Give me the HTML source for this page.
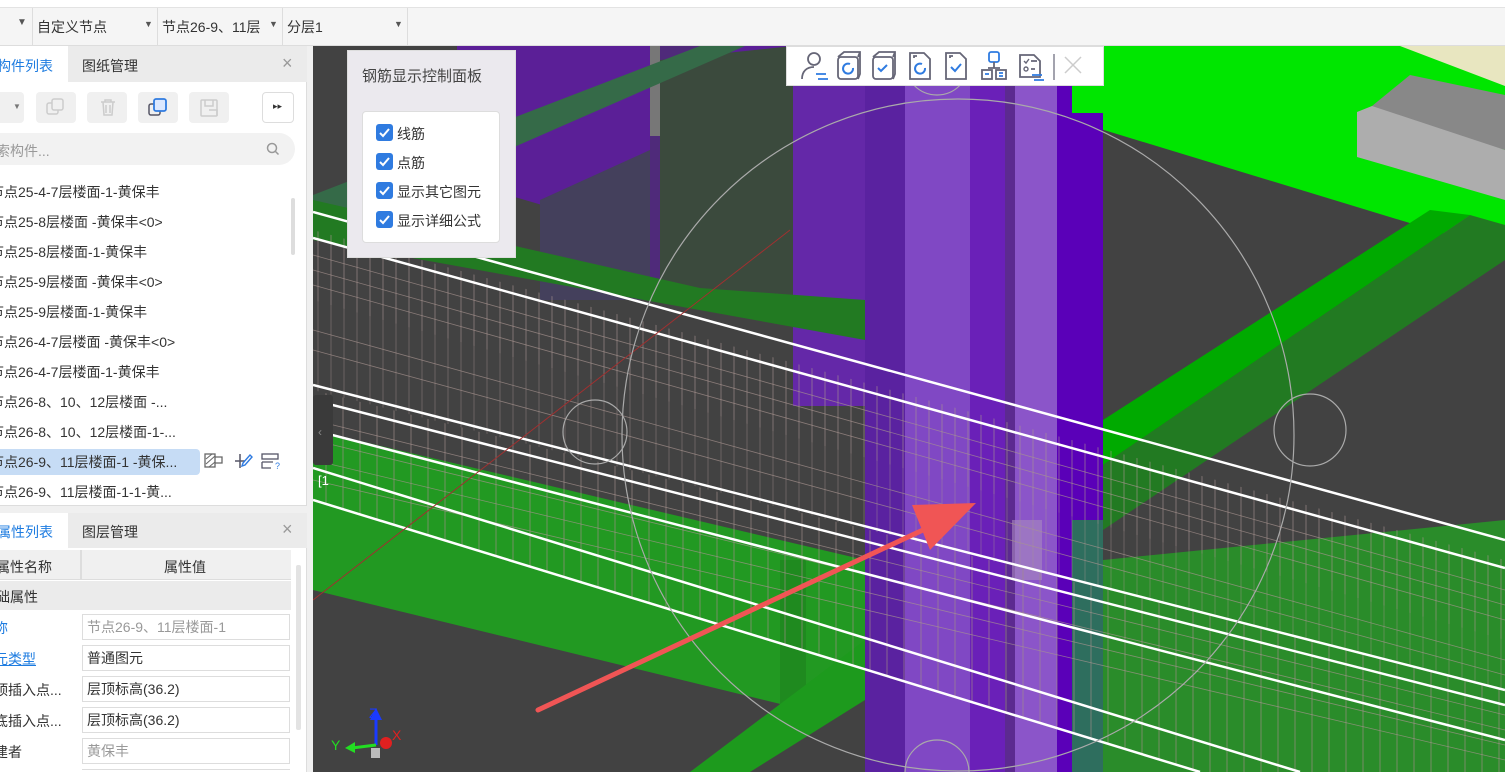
<!DOCTYPE html>
<html><head><meta charset="utf-8">
<style>
*{margin:0;padding:0;box-sizing:border-box}
html,body{width:1505px;height:772px;overflow:hidden}
body{position:relative;background:#fff;font-family:"Liberation Sans","Noto Sans CJK SC",sans-serif;font-size:14px;color:#333}
.a{position:absolute}
.t{position:absolute;white-space:nowrap}
.btn{position:absolute;background:#f0f0f0;border-radius:4px;height:31px;top:92px}
.row{position:absolute;left:-10px;white-space:nowrap;font-size:14px;color:#333}
.inp{position:absolute;left:82px;width:208px;height:26px;border:1px solid #ddd;background:#fff;padding-left:4px;line-height:24px;font-size:14px}
.cb{position:absolute;left:376px;width:17px;height:17px;background:#2f7be0;border-radius:3px}
.cb svg{position:absolute;left:2px;top:2px}
.cl{position:absolute;left:397px;font-size:14px;color:#333}
</style></head><body>
<div class="a" style="left:0;top:0;width:1505px;height:8px;background:#fff;border-bottom:1px solid #e3e3e3"></div>
<div class="a" style="left:0;top:8px;width:1505px;height:38px;background:#f5f5f5;border-bottom:1px solid #ddd"></div>
<div class="t" style="left:17px;top:17px;font-size:10px;color:#555">▼</div>
<div class="a" style="left:32px;top:8px;width:1px;height:38px;background:#ddd"></div>
<div class="t" style="left:37px;top:17px">自定义节点</div>
<div class="t" style="left:144px;top:19px;font-size:9px;color:#555">▼</div>
<div class="a" style="left:157px;top:8px;width:1px;height:38px;background:#ddd"></div>
<div class="t" style="left:162px;top:17px;width:106px;overflow:hidden">节点26-9、11层</div>
<div class="t" style="left:269px;top:19px;font-size:9px;color:#555">▼</div>
<div class="a" style="left:282px;top:8px;width:1px;height:38px;background:#ddd"></div>
<div class="t" style="left:287px;top:17px">分层1</div>
<div class="t" style="left:394px;top:19px;font-size:9px;color:#555">▼</div>
<div class="a" style="left:407px;top:8px;width:1px;height:38px;background:#ddd"></div>

<div class="a" style="left:0;top:46px;width:307px;height:460px;background:#fff;border-right:1px solid #ddd;border-bottom:1px solid #ddd"></div>
<div class="a" style="left:68px;top:46px;width:239px;height:36px;background:#ebebeb"></div>
<div class="t" style="left:-3px;top:56px;color:#1e7ce0">构件列表</div>
<div class="t" style="left:82px;top:56px">图纸管理</div>
<div class="t" style="left:282px;top:53px;font-size:18px;color:#999">×</div>
<div class="btn" style="left:-5px;width:29px"></div>
<div class="t" style="left:13px;top:102px;font-size:8px;color:#777">▼</div>
<div class="btn" style="left:36px;width:40px"></div>
<div class="btn" style="left:87px;width:40px"></div>
<div class="btn" style="left:138px;width:40px"></div>
<div class="btn" style="left:189px;width:40px"></div>
<div class="btn" style="left:262px;width:32px;background:#fff;border:1px solid #ddd"></div>
<svg class="a" style="left:44px;top:96px" width="24" height="24"><rect x="3" y="7" width="11" height="11" rx="2" fill="none" stroke="#ccc" stroke-width="1.5"/><rect x="8" y="3" width="11" height="11" rx="2" fill="#f0f0f0" stroke="#ccc" stroke-width="1.5"/></svg>
<svg class="a" style="left:96px;top:96px" width="24" height="24"><path d="M5 6h14M9 6V4h6v2M7 6l1 13h8l1-13M10 9v8M14 9v8" fill="none" stroke="#ccc" stroke-width="1.5"/></svg>
<svg class="a" style="left:146px;top:96px" width="24" height="24"><rect x="3" y="8" width="11" height="11" rx="2" fill="none" stroke="#556" stroke-width="1.5"/><rect x="8" y="3" width="12" height="12" rx="2" fill="#dbe8ff" stroke="#2f7be0" stroke-width="1.8"/></svg>
<svg class="a" style="left:197px;top:96px" width="24" height="24"><rect x="4" y="4" width="16" height="16" rx="1" fill="none" stroke="#ccc" stroke-width="1.5"/><path d="M8 4v6h8V4M12 14h8v6" fill="none" stroke="#ccc" stroke-width="1.5"/></svg>
<div class="t" style="left:273px;top:101px;font-size:9px;color:#333">▸▸</div>
<div class="a" style="left:-20px;top:133px;width:315px;height:32px;border-radius:16px;background:#f2f2f2"></div>
<div class="t" style="left:-4px;top:141px;color:#999">索构件...</div>
<svg class="a" style="left:266px;top:142px" width="14" height="14"><circle cx="6" cy="6" r="4.5" fill="none" stroke="#999" stroke-width="1.5"/><path d="M9.5 9.5l3 3" stroke="#999" stroke-width="1.5"/></svg>
<div class="a" style="left:291px;top:198px;width:4px;height:57px;border-radius:2px;background:#ddd"></div>
<div class="row" style="top:182px">节点25-4-7层楼面-1-黄保丰</div>
<div class="row" style="top:212px">节点25-8层楼面 -黄保丰&lt;0&gt;</div>
<div class="row" style="top:242px">节点25-8层楼面-1-黄保丰</div>
<div class="row" style="top:272px">节点25-9层楼面 -黄保丰&lt;0&gt;</div>
<div class="row" style="top:302px">节点25-9层楼面-1-黄保丰</div>
<div class="row" style="top:332px">节点26-4-7层楼面 -黄保丰&lt;0&gt;</div>
<div class="row" style="top:362px">节点26-4-7层楼面-1-黄保丰</div>
<div class="row" style="top:392px">节点26-8、10、12层楼面 -...</div>
<div class="row" style="top:422px">节点26-8、10、12层楼面-1-...</div>
<div class="a" style="left:-5px;top:449px;width:205px;height:26px;border-radius:4px;background:#c6dcf5"></div>
<div class="row" style="top:452px">节点26-9、11层楼面-1 -黄保...</div>
<svg class="a" style="left:203px;top:451px" width="22" height="20"><rect x="2" y="3" width="10" height="13" fill="none" stroke="#666" stroke-width="1.3"/><path d="M3 8l6-5M3 13l9-8M6 16l6-5" stroke="#666" stroke-width="1"/><path d="M12 6h7v6h-7" fill="none" stroke="#666" stroke-width="1.3"/></svg>
<svg class="a" style="left:232px;top:451px" width="22" height="20"><path d="M8 3v14M3 10h10" stroke="#556" stroke-width="1.5" fill="none"/><path d="M11 12l7-8 2 2-7 8-3 1z" fill="none" stroke="#2f7be0" stroke-width="1.4"/></svg>
<svg class="a" style="left:260px;top:451px" width="24" height="20"><rect x="2" y="3" width="16" height="5" fill="none" stroke="#556" stroke-width="1.3"/><path d="M2 11h11M2 11v6h9" stroke="#556" stroke-width="1.3" fill="none"/><text x="15" y="18" font-size="9" fill="#2f7be0" font-family="Liberation Sans">?</text></svg>
<div class="row" style="top:482px">节点26-9、11层楼面-1-1-黄...</div>

<div class="a" style="left:0;top:506px;width:313px;height:7px;background:#f0f0f0"></div>
<div class="a" style="left:0;top:513px;width:307px;height:259px;background:#fff;border-right:1px solid #ddd"></div>
<div class="a" style="left:68px;top:513px;width:239px;height:35px;background:#ebebeb"></div>
<div class="t" style="left:-3px;top:522px;color:#1e7ce0">属性列表</div>
<div class="t" style="left:82px;top:522px">图层管理</div>
<div class="t" style="left:282px;top:519px;font-size:18px;color:#999">×</div>
<div class="a" style="left:0;top:550px;width:291px;height:30px;background:#f0f0f0;border-bottom:1px solid #ddd"></div>
<div class="a" style="left:80px;top:550px;width:2px;height:30px;background:#ddd"></div>
<div class="t" style="left:-4px;top:557px">属性名称</div>
<div class="t" style="left:164px;top:557px">属性值</div>
<div class="a" style="left:0;top:581px;width:291px;height:29px;background:#ebebeb"></div>
<div class="t" style="left:-4px;top:587px">础属性</div>
<div class="a" style="left:296px;top:565px;width:5px;height:165px;border-radius:2px;background:#e3e3e3"></div>
<div class="t" style="left:-6px;top:618px;color:#1e7ce0">称</div>
<div class="inp" style="top:614px;color:#999">节点26-9、11层楼面-1</div>
<div class="t" style="left:-6px;top:649px;color:#1e7ce0;text-decoration:underline">元类型</div>
<div class="inp" style="top:645px">普通图元</div>
<div class="t" style="left:-6px;top:680px">顶插入点...</div>
<div class="inp" style="top:676px">层顶标高(36.2)</div>
<div class="t" style="left:-6px;top:711px">底插入点...</div>
<div class="inp" style="top:707px">层顶标高(36.2)</div>
<div class="t" style="left:-6px;top:742px">建者</div>
<div class="inp" style="top:738px;color:#999">黄保丰</div>
<div class="a" style="left:82px;top:769px;width:208px;height:3px;border-top:1px solid #ddd"></div>
<div class="a" style="left:307px;top:46px;width:6px;height:726px;background:#f0f0f0"></div>

<svg class="a" style="left:313px;top:46px;overflow:hidden" width="1192" height="726" viewBox="313 46 1192 726">
<defs>
<pattern id="st" width="13" height="20" patternUnits="userSpaceOnUse"><line x1="6" y1="0" x2="6" y2="20" stroke="#a89490" stroke-width="1"/></pattern>
<pattern id="st2" width="17" height="20" patternUnits="userSpaceOnUse"><line x1="3" y1="0" x2="3" y2="20" stroke="#a08c88" stroke-width="1"/></pattern>
</defs>
<rect x="313" y="46" width="1192" height="726" fill="#424242"/>
<polygon points="457,46 865,46 865,300 457,180" fill="#5b1f97"/>
<polygon points="540,200 650,150 650,300 540,300" fill="#44405c"/>
<polygon points="650,46 700,46 700,300 650,300" fill="#4f2a7a"/>
<rect x="650" y="46" width="10" height="90" fill="#777"/>
<polygon points="660,60 793,46 793,300 660,300" fill="#3b4a3d"/>
<rect x="793" y="46" width="72" height="360" fill="#6428a8"/>
<polygon points="313,195 700,46 745,46 313,235" fill="#356a48"/>
<polygon points="313,200 700,288 865,300 865,340 313,240" fill="#227a22"/>
<polygon points="1072,46 1505,46 1505,252 1048,113" fill="#00e600"/>
<polygon points="1400,46 1505,46 1505,86" fill="#e8e6c0"/>
<polygon points="1372,106 1410,75 1505,95 1505,150 1372,112" fill="#888"/>
<polygon points="1357,112 1372,106 1505,150 1505,200 1357,157" fill="#adadad"/>
<polygon points="1103,420 1430,210 1470,215 1103,465" fill="#00aa00"/>
<polygon points="1103,465 1470,215 1505,225 1505,260 1103,530" fill="#227a22"/>
<polygon points="313,430 865,560 865,700 805,710 313,590" fill="#229922"/>
<rect x="780" y="560" width="26" height="150" fill="#1f8a1f"/>
<polygon points="690,772 865,640 865,700 750,772" fill="#1d9a1d"/>
<polygon points="1103,560 1505,520 1505,772 1103,772" fill="#2a8c2a"/>
<polygon points="1072,520 1103,520 1103,772 1072,772" fill="#2e6e5e"/>
<rect x="865" y="46" width="40" height="726" fill="#5a22a0"/>
<rect x="905" y="46" width="65" height="726" fill="#8048c4"/>
<rect x="970" y="46" width="35" height="726" fill="#6a20b8"/>
<rect x="1005" y="46" width="10" height="726" fill="#5c2a90"/>
<rect x="1015" y="46" width="42" height="726" fill="#8b55c9"/>
<rect x="1057" y="46" width="15" height="726" fill="#5a00b8"/>
<rect x="1072" y="113" width="31" height="407" fill="#5a00b8"/>
<rect x="1012" y="520" width="30" height="60" fill="#a88ac0" opacity="0.6"/>
<polygon points="313,230 1505,560 1505,640 313,300" fill="url(#st)" opacity="0.6"/>
<polygon points="313,390 1505,690 1505,772 1200,772 313,500" fill="url(#st2)" opacity="0.65"/>
<polygon points="313,300 1505,640 1505,690 313,390" fill="url(#st)" opacity="0.4"/>
<g stroke="#a89490" stroke-width="0.8" opacity="0.7">
<line x1="313" y1="255" x2="1505" y2="590"/><line x1="313" y1="270" x2="1505" y2="605"/><line x1="313" y1="285" x2="1505" y2="620"/>
<line x1="313" y1="330" x2="1505" y2="660"/><line x1="313" y1="350" x2="1505" y2="675"/>
<line x1="313" y1="420" x2="1505" y2="715"/><line x1="313" y1="440" x2="1505" y2="730"/><line x1="313" y1="460" x2="1505" y2="745"/><line x1="313" y1="480" x2="1505" y2="760"/>
</g>
<g stroke="#fff" stroke-width="2.5">
<line x1="313" y1="212" x2="1505" y2="540"/>
<line x1="313" y1="238" x2="1505" y2="568"/>
<line x1="313" y1="385" x2="1505" y2="690"/>
<line x1="313" y1="400" x2="1505" y2="705"/>
<line x1="313" y1="468" x2="1300" y2="772"/>
<line x1="313" y1="500" x2="1200" y2="772"/>
<line x1="313" y1="430" x2="1505" y2="740"/>
</g>
<line x1="313" y1="600" x2="790" y2="230" stroke="#a03030" stroke-width="1"/>
<g fill="none" stroke="#aaa" stroke-width="1.2">
<circle cx="958" cy="435" r="336"/>
<circle cx="595" cy="432" r="32"/>
<circle cx="1310" cy="430" r="36"/>
<circle cx="937" cy="63" r="32"/>
<path d="M905 772a32 32 0 0 1 64 0"/>
</g>
<line x1="538" y1="710" x2="940" y2="522" stroke="#f05555" stroke-width="5" stroke-linecap="round"/>
<polygon points="976,503 912,505 930,550" fill="#f05555"/>
<rect x="313" y="395" width="20" height="70" rx="3" fill="#3a3a3a"/>
<text x="318" y="436" font-size="12" fill="#888" font-family="Liberation Sans">‹</text>
<text x="318" y="485" font-size="13" fill="#fff" font-family="Liberation Sans">[1</text>
<line x1="376" y1="745" x2="376" y2="718" stroke="#1a3aff" stroke-width="3"/>
<polygon points="370,720 382,720 376,708" fill="#1a3aff"/>
<text x="369" y="718" font-size="14" fill="#1a3aff" font-family="Liberation Sans">Z</text>
<line x1="376" y1="745" x2="352" y2="748" stroke="#22dd22" stroke-width="3"/>
<polygon points="355,742 355,753 345,748" fill="#22dd22"/>
<text x="331" y="750" font-size="14" fill="#22dd22" font-family="Liberation Sans">Y</text>
<circle cx="386" cy="743" r="6" fill="#e02020"/>
<text x="392" y="740" font-size="14" fill="#e02020" font-family="Liberation Sans">X</text>
<rect x="371" y="748" width="9" height="10" fill="#bbb"/>
</svg>

<div class="a" style="left:347px;top:50px;width:169px;height:208px;background:#ebe9ee;border:1px solid #ddd"></div>
<div class="t" style="left:362px;top:65px;font-size:15px;color:#444">钢筋显示控制面板</div>
<div class="a" style="left:362px;top:111px;width:138px;height:132px;background:#fff;border:1px solid #ddd;border-radius:4px"></div>
<div class="cb" style="top:124px"><svg width="13" height="13"><path d="M2 7l3 3 6-7" stroke="#fff" stroke-width="2" fill="none"/></svg></div>
<div class="cl" style="top:124px">线筋</div>
<div class="cb" style="top:153px"><svg width="13" height="13"><path d="M2 7l3 3 6-7" stroke="#fff" stroke-width="2" fill="none"/></svg></div>
<div class="cl" style="top:153px">点筋</div>
<div class="cb" style="top:182px"><svg width="13" height="13"><path d="M2 7l3 3 6-7" stroke="#fff" stroke-width="2" fill="none"/></svg></div>
<div class="cl" style="top:182px">显示其它图元</div>
<div class="cb" style="top:211px"><svg width="13" height="13"><path d="M2 7l3 3 6-7" stroke="#fff" stroke-width="2" fill="none"/></svg></div>
<div class="cl" style="top:211px">显示详细公式</div>

<div class="a" style="left:786px;top:46px;width:318px;height:40px;background:#fff;border:1px solid #ddd"></div>
<svg class="a" style="left:796px;top:50px" width="300" height="34" fill="none" stroke-width="1.8">
<circle cx="18" cy="9" r="6" stroke="#667"/><path d="M6 29c0-8 5-12 12-12" stroke="#667"/><path d="M20 24h10M22 29h10" stroke="#2f7be0"/>
<rect x="42" y="7" width="20" height="22" rx="3" stroke="#667"/><path d="M42 7l6-5h16v22l-2 5M62 7l2-5" stroke="#667"/><path d="M57 18a5 5 0 1 1-3-4" stroke="#2f7be0" stroke-width="2"/>
<rect x="77" y="7" width="20" height="22" rx="3" stroke="#667"/><path d="M77 7l6-5h16v22l-2 5M97 7l2-5" stroke="#667"/><path d="M82 18l3 3 6-6" stroke="#2f7be0" stroke-width="2"/>
<path d="M114 3h14l6 6v20h-20z" stroke="#667"/><path d="M118 8v-2h3" stroke="#667"/><path d="M129 18a5 5 0 1 1-3-4" stroke="#2f7be0" stroke-width="2"/>
<path d="M150 3h14l6 6v20h-20z" stroke="#667"/><path d="M154 8v-2h3" stroke="#667"/><path d="M155 17l4 4 6-7" stroke="#2f7be0" stroke-width="2"/>
<rect x="193" y="2" width="10" height="10" rx="2" stroke="#2f7be0"/><path d="M198 12v6M192 18h12" stroke="#667"/><rect x="186" y="20" width="10" height="9" stroke="#667"/><rect x="200" y="20" width="10" height="9" stroke="#667"/><path d="M189 24h4M203 23h4M203 26h4" stroke="#2f7be0"/>
<path d="M224 5h14l6 6v16h-20z" stroke="#667"/><path d="M228 11l2 2 3-4" stroke="#667" stroke-width="1.4"/><circle cx="230" cy="19" r="2" stroke="#667" stroke-width="1.4"/><path d="M235 11h6M235 19h4" stroke="#667"/><path d="M236 25h10M238 30h10" stroke="#2f7be0"/>
<path d="M258 4v26" stroke="#667" stroke-width="1.2"/>
<path d="M269 7l16 16M285 7l-16 16" stroke="#ccc" stroke-width="1.5"/>
</svg>
</body></html>
